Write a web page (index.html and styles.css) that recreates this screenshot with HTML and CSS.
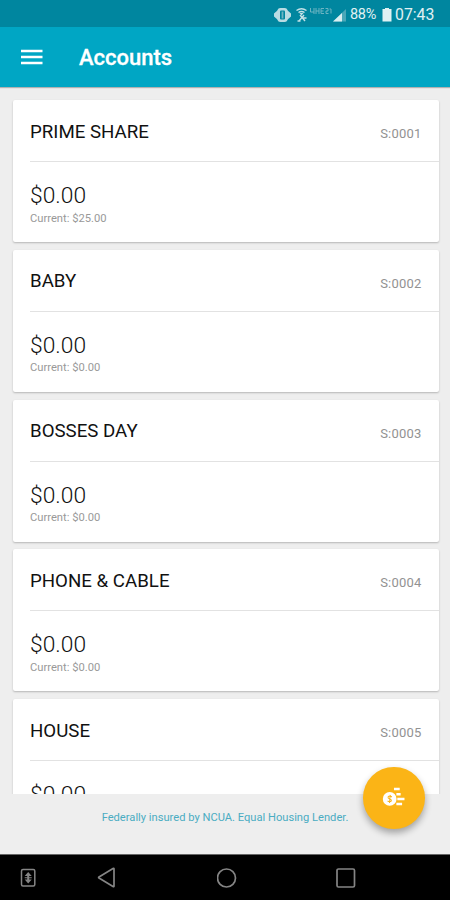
FILE: index.html
```html
<!DOCTYPE html>
<html lang="en">
<head>
<meta charset="utf-8">
<title>Accounts</title>
<link rel="stylesheet" href="styles.css">
</head>
<body>
<div class="app">
  <div class="status">
    <svg class="status-icons" width="74" height="18" viewBox="0 0 74 18">
      <g fill="#b9dce3">
        <path d="M5 4h1v10H5l-4-3.500v-3zM13 4h1l4 3.500v3L14 14h-1z"/>
        <rect x="4.500" y="2" width="10" height="14" rx="3"/>
        <rect x="7" y="4.500" width="5" height="9" rx="1" fill="#00869f"/>
        <rect x="8.600" y="5.500" width="1.800" height="7" fill="#6db4c2"/>
      </g>
      <g fill="none" stroke="#c3e1e7" stroke-width="1.400">
        <path d="M23.500 4.500q5-3.500 10 0M25.500 6.500q3-2 6 0"/>
        <path d="M27 9l5 6M31 9l-5 6M24.500 15h3M29.500 12h4"/>
      </g>
      <path d="M26.500 7h4l-2 2.500z" fill="#c3e1e7"/>
      <g fill="none" stroke="#6db4c2" stroke-width="1">
        <path d="M37.500 2v4h3.500M41 2v6M43 2v6M43 5h3M46 2v6M51 2.500h-3v5h3M48 5h2.500M52.500 2.500H55V5h-2v2.500h2.500M56.500 3h1.500v4.500"/>
      </g>
      <path d="M73 3v12.500H60z" fill="#4aa7b8"/>
      <path d="M69 7v8.500h-9z" fill="#d9eef1"/>
    </svg>
    <span class="percent">88%</span>
    <svg class="battery" width="10" height="14" viewBox="0 0 10 14"><path d="M3 0h4v1h2.500v12.500h-9V1H3z" fill="#e0f1f3"/></svg>
    <span class="clock">07:43</span>
  </div>
  <header class="bar">
    <svg width="22" height="16" viewBox="0 0 22 16"><path d="M0 2h21.500M0 8h21.500M0 14h21.500" stroke="#fff" stroke-width="2.500"/></svg>
    <h1>Accounts</h1>
  </header>
  <main class="list">
    <section class="card">
      <div class="head"><h2>PRIME SHARE</h2><span>S:0001</span></div>
      <div class="body"><div class="amount">$0.00</div><div class="current">Current: $25.00</div></div>
    </section>
    <section class="card">
      <div class="head"><h2>BABY</h2><span>S:0002</span></div>
      <div class="body"><div class="amount">$0.00</div><div class="current">Current: $0.00</div></div>
    </section>
    <section class="card">
      <div class="head"><h2>BOSSES DAY</h2><span>S:0003</span></div>
      <div class="body"><div class="amount">$0.00</div><div class="current">Current: $0.00</div></div>
    </section>
    <section class="card">
      <div class="head"><h2>PHONE &amp; CABLE</h2><span>S:0004</span></div>
      <div class="body"><div class="amount">$0.00</div><div class="current">Current: $0.00</div></div>
    </section>
    <section class="card">
      <div class="head"><h2>HOUSE</h2><span>S:0005</span></div>
      <div class="body"><div class="amount">$0.00</div></div>
    </section>
  </main>
  <footer class="legal">Federally insured by NCUA. Equal Housing Lender.</footer>
  <button class="fab" aria-label="Transfer money">
    <svg width="23" height="21" viewBox="0 0 24 22">
      <path d="M12.500 2h6M15 7.500h4.500M16 12.500h7.500M15 17.800h6" stroke="#fff" stroke-width="2.600"/>
      <circle cx="8" cy="12.500" r="7.200" fill="#fff"/>
      <path d="M10.300 10.500q-2.500-2-4 0c-.8 2.500 4.200 1.500 3.500 4q-1.500 1.500-4 .2M8.600 8.300l-.8 8.500" fill="none" stroke="#fbb416" stroke-width="1.100"/>
    </svg>
  </button>
  <nav class="nav">
    <svg width="16" height="20" viewBox="0 0 16 20"><rect x="1.500" y="1.500" width="13.300" height="16.500" rx="1.500" fill="none" stroke="#858585" stroke-width="1.500"/><path d="M8.200 4l3.500 4H9.200v3.500h2.500l-3.500 4-3.500-4h2.500V8H4.700zM4.700 9.200h7v1h-7z" fill="#858585"/></svg>
    <svg width="20" height="22" viewBox="0 0 20 22"><path d="M17 1.800v17.400q0 .8-1 .3L2 11q-.8-.5 0-1L16 1.500q1-.5 1 .3z" fill="none" stroke="#858585" stroke-width="1.700"/></svg>
    <svg width="22" height="22" viewBox="0 0 22 22"><circle cx="9.300" cy="11" r="9" fill="none" stroke="#858585" stroke-width="1.700" transform="translate(.2)"/></svg>
    <svg width="20" height="22" viewBox="0 0 20 22"><rect x="1" y="2" width="17.500" height="18" rx="1.500" fill="none" stroke="#858585" stroke-width="1.700"/></svg>
  </nav>
</div>
</body>
</html>
```
FILE: styles.css
```css
* { box-sizing: border-box; }
body, h1, h2 { margin: 0; }
body { font-family: Roboto, sans-serif; background: #eee; }
.app {
  position: relative;
  display: flex;
  flex-direction: column;
  width: 450px;
  height: 900px;
  overflow: hidden;
}
.status {
  display: flex;
  align-items: center;
  justify-content: flex-end;
  height: 27px;
  padding: 2px 15px 0 0;
  background: #00869f;
  color: #e0f1f3;
  line-height: 18px;
}
.status-icons { flex: none; }
.percent { width: 29px; margin-left: 3px; font-size: 14.5px; letter-spacing: -.3px; }
.battery { margin: 0 3px 0 3px; }
.clock { width: 40px; font-size: 15.8px; }
.bar {
  position: relative;
  z-index: 1;
  display: flex;
  align-items: center;
  height: 60px;
  padding: 2px 0 0 20.5px;
  background: #00a6c4;
  color: #fff;
  box-shadow: 0 1px 1px rgba(0, 0, 0, .25);
}
.bar svg { margin-top: -3px; }
.bar h1 { margin-left: 36.5px; font-size: 22px; font-weight: 500; line-height: 28px; -webkit-text-stroke: .3px #fff; }
.list {
  display: flex;
  flex-direction: column;
  gap: 7.75px;
  height: 706.5px;
  padding: 13px 11px 0 12.5px;
  overflow: hidden;
}
.card {
  flex: none;
  height: 142px;
  background: #fff;
  border-radius: 2px;
  box-shadow: 0 1px 2px rgba(0, 0, 0, .24);
}
.head {
  display: flex;
  align-items: center;
  justify-content: space-between;
  height: 62px;
  margin-left: 17.5px;
  padding: 2px 17.5px 0 0;
  border-bottom: 1.5px solid #e2e2e2;
}
.head h2 { color: #111; font-size: 18.7px; font-weight: 400; line-height: 24px; }
.head span { padding-top: 4px; color: #929292; font-size: 13px; letter-spacing: .2px; }
.body { padding: 20px 17.5px 0; }
.amount { color: #111; font-size: 22.8px; font-weight: 300; line-height: 28px; }
.current { margin-top: 1.5px; color: #999; font-size: 11.2px; line-height: 13px; }
.legal {
  height: 60.5px;
  padding-top: 16px;
  color: #4aacc2;
  font-size: 11.15px;
  line-height: 15px;
  text-align: center;
}
.fab {
  position: absolute;
  left: 363px;
  top: 767px;
  display: flex;
  align-items: center;
  justify-content: center;
  width: 61.5px;
  height: 61.5px;
  padding: 0;
  border: 0;
  border-radius: 50%;
  background: #fbb416;
  box-shadow: 0 4px 7px rgba(0, 0, 0, .32);
}
.nav {
  display: grid;
  grid-template-columns: 77px 120px 119px 1fr;
  align-items: center;
  height: 46px;
  padding-left: 20px;
  border-top: 1px solid #666;
  background: #000;
}
```
